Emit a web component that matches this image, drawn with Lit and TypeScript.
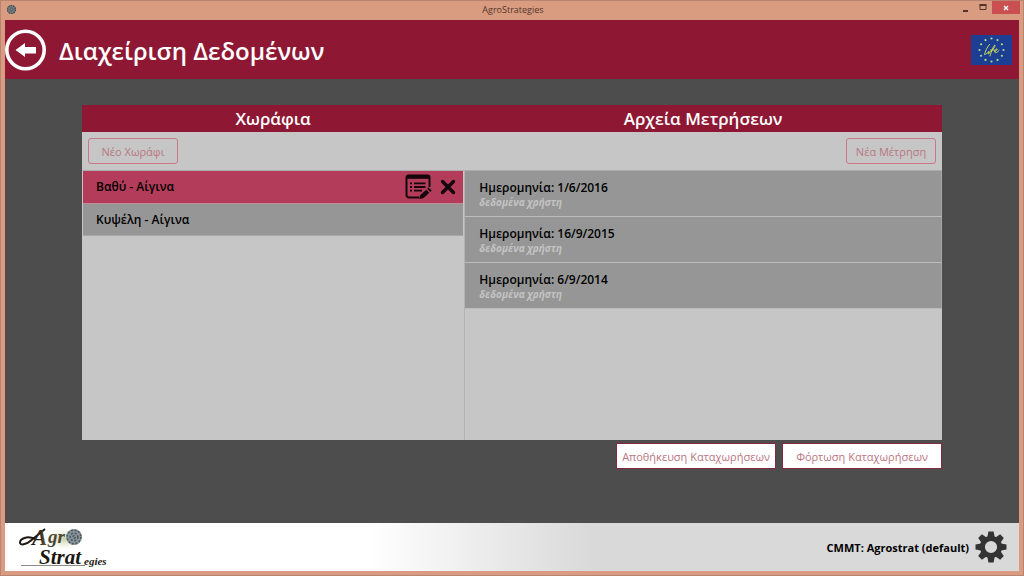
import { LitElement, html, css, svg } from "lit";
import { customElement, state } from "lit/decorators.js";
import { classMap } from "lit/directives/class-map.js";

const stars = Array.from({ length: 12 }, (_, i) => {
  const a = (i * Math.PI) / 6;
  return svg`<circle cx=${20.5 + 12 * Math.sin(a)} cy=${15 - 11.5 * Math.cos(a)} r="1.1" fill="#b9d98c"></circle>`;
});

const teeth = [0, 45, 90, 135, 180, 225, 270, 315].map(
  (a) => svg`<path d="M-3.6 -10L-2.6 -15.5H2.6L3.6 -10Z" transform="rotate(${a})"></path>`
);

@customElement("agro-logo")
export class AgroLogo extends LitElement {
  static styles = css`
    :host { display: block; }
    svg { display: block; }
    .word { font-family: "Liberation Serif", serif; font-style: italic; font-weight: 700; }
  `;
  render() {
    return html`<svg width="92" height="46" viewBox="0 0 92 46" role="img" aria-label="AgroStrategies">
      <defs>
        <radialGradient id="glow"><stop offset="0" stop-color="#cdd0a0"></stop><stop offset="1" stop-color="#fff" stop-opacity="0"></stop></radialGradient>
        <linearGradient id="ink" x2="1" y2="0"><stop offset="0" stop-color="#111"></stop><stop offset=".6" stop-color="#33291c"></stop><stop offset="1" stop-color="#6f6a4c"></stop></linearGradient>
      </defs>
      <ellipse cx="46" cy="15" rx="22" ry="13" fill="url(#glow)"></ellipse>
      <path d="M17 15C9 11 2 15 2 18.500c0 3 6 2.500 11-2L27 5" fill="none" stroke="#1c1812" stroke-width="2"></path>
      <text class="word" x="14" y="21" font-size="23" fill="url(#ink)">A</text>
      <text class="word" x="30" y="19" font-size="19" fill="#4c4732">gr</text>
      <circle cx="56" cy="13" r="8" fill="#8a949b"></circle>
      <g fill="none" stroke="#4b575f" stroke-width="1.5" stroke-dasharray="2 1.6">
        <circle cx="56" cy="13" r="6.8"></circle><circle cx="56" cy="13" r="3.800"></circle><circle cx="56" cy="13" r="1.2"></circle>
      </g>
      <path d="M3 41.500H67" stroke="#8a8a8a" stroke-width="1"></path>
      <text class="word" x="21" y="40" font-size="21" fill="#1b1712">Strat</text>
      <text class="word" x="66" y="41" font-size="11" fill="#1b1712">egies</text>
    </svg>`;
  }
}

@customElement("app-root")
export class AppRoot extends LitElement {
  @state() private selected = 0;

  private fields = ["Βαθύ - Αίγινα", "Κυψέλη - Αίγινα"];
  private dates = ["1/6/2016", "16/9/2015", "6/9/2014"];

  static styles = css`
    * { box-sizing: border-box; }
    :host {
      display: flex; flex-direction: column; height: 100vh; box-sizing: border-box;
      background: #d99c80; border: 1px solid #b98470;
      font-family: "Open Sans", "Noto Sans", sans-serif; font-size: 12px; color: #000;
    }
    h1, h2, ul { margin: 0; padding: 0; font-weight: 600; }
    ul { list-style: none; }
    button { font: inherit; color: inherit; background: none; border: 0; padding: 0; margin: 0; cursor: pointer; }
    svg { display: block; }

    .titlebar { display: grid; grid-template-columns: 1fr auto 1fr; align-items: center; height: 19px; padding: 0 3px 2px 5px; color: #54332a; font-size: 9px; flex: none; }
    .window-buttons { display: flex; justify-content: flex-end; align-self: start; }
    .window-buttons button { height: 13px; width: 18px; display: grid; place-items: center; }
    .window-buttons .close { background: #c94f50; width: 28px; }

    .window { flex: 1; display: flex; flex-direction: column; margin: 0 4px 4px; background: #4d4d4d; min-height: 0; }
    .header { display: flex; align-items: center; gap: 13px; height: 59px; padding-right: 7px; background: #8e1734; color: #fff; flex: none; }
    .header h1 { flex: 1; font-size: 24px; line-height: 32px; padding-top: 2px; }

    .main { flex: 1; display: flex; flex-direction: column; padding: 26px 77px 54px; min-height: 0; }
    .panel { flex: 1; display: grid; grid-template-columns: 4fr 5fr; background: #c6c6c6; min-height: 240px; }
    .column { display: flex; flex-direction: column; min-width: 0; }
    .column + .column .content { border-left: 1px solid #b4b4b4; }
    .column h2 { background: #8e1734; color: #fff; text-align: center; font-size: 17px; line-height: 26px; height: 27px; padding-top: 1px; }
    .tools { display: flex; align-items: center; height: 38px; padding: 0 6px; }
    .tools.end { justify-content: flex-end; }
    .outline { width: 90px; height: 26px; border: 1px solid #c9798a; border-radius: 3px; color: #b97683; font-size: 11px; }
    .content { flex: 1; border-top: 1px solid #acacac; }
    .content.fields { padding: 0 1px; }

    .field { display: flex; align-items: center; gap: 8px; height: 32px; padding-right: 7px; background: #969696; border-bottom: 1px solid #a8a8a8; font-weight: 600; }
    .field .name { flex: 1; text-align: left; padding-left: 13px; line-height: 32px; }
    .field.selected { height: 33px; background: #b23c59; border-bottom-color: #c08c98; }
    .record { height: 46px; padding: 8px 14px 0; background: #969696; border-bottom: 1px solid #bcbcbc; border-right: 1px solid #a8a8a8; }
    .date { font-weight: 600; line-height: 17px; }
    .note { font-size: 10px; line-height: 13px; font-style: italic; font-weight: 700; color: #c3c3c3; }

    .actions { display: flex; justify-content: flex-end; gap: 6px; padding-top: 3px; flex: none; }
    .action { width: 160px; height: 26px; background: #fff; border: 1px solid #84283f; color: #b97683; white-space: nowrap; font-size: 11px; }

    .footer { display: flex; align-items: center; justify-content: space-between; height: 48px; padding: 0 12px 0 13px; background: linear-gradient(90deg, #fff 0%, #fff 36%, #d9d9d9 58%, #d9d9d9 100%); flex: none; }
    .account { display: flex; align-items: center; gap: 6px; font-weight: 700; font-size: 11px; }
  `;

  render() {
    return html`
      <div class="titlebar">
        <svg width="11" height="11" viewBox="0 0 11 11"><circle cx="5.5" cy="5.5" r="4.5" fill="#77797a"></circle><circle cx="5.5" cy="5.5" r="4" fill="none" stroke="#414c52" stroke-width="1.2" stroke-dasharray="1.5 1"></circle><circle cx="5.5" cy="5.5" r="1.7" fill="none" stroke="#414c52" stroke-dasharray="1 1"></circle></svg>
        <span>AgroStrategies</span>
        <div class="window-buttons">
          <button aria-label="Minimize"><svg width="7" height="9"><path d="M1 8H6" stroke="#54332a" stroke-width="2"></path></svg></button>
          <button aria-label="Maximize"><svg width="8" height="7"><path d="M1 1V5.5H7V1" fill="none" stroke="#54332a"></path><path d="M.5 1H7.5" stroke="#54332a" stroke-width="2"></path></svg></button>
          <button class="close" aria-label="Close"><svg width="6" height="6"><path d="M1 1L5 5M5 1L1 5" stroke="#fff" stroke-width="1.4"></path></svg></button>
        </div>
      </div>
      <div class="window">
        <header class="header">
          <button aria-label="Πίσω">
            <svg width="41" height="42" viewBox="0 0 41 42"><circle cx="20.5" cy="21" r="18.7" fill="none" stroke="#fff" stroke-width="3.6"></circle><path d="M10.5 21L20 14V18H31V24.500H20V28Z" fill="#fff"></path></svg>
          </button>
          <h1>Διαχείριση Δεδομένων</h1>
          <svg width="41" height="30" viewBox="0 0 41 30" role="img" aria-label="Life">
            <rect width="41" height="30" fill="#1c3f94"></rect>
            ${stars}
            <g fill="none" stroke="#c5d958" stroke-linecap="round" stroke-linejoin="round">
              <path stroke-width="1" d="M18.500 9.500C15.500 13 14.500 16 13.500 19.500C15 19.500 16.500 18 17.500 16.500M18 16.500L17 19C18.500 18.500 19.500 17 20.500 15.500"></path>
              <path stroke-width="1" d="M20 16C22.500 14 24.500 11.500 24 10C22.500 10.500 20.500 16 19 21M19.500 15H24M23.500 16.500C25.500 16 27 14.500 26 13.800C24.500 13.800 23 17.500 24.500 17.700C25.800 17.700 27 16.500 28 15.500"></path>
            </g>
          </svg>
        </header>
        <main class="main">
          <div class="panel">
            <section class="column">
              <h2>Χωράφια</h2>
              <div class="tools"><button class="outline">Νέο Χωράφι</button></div>
              <div class="content fields"><ul>
                ${this.fields.map((name, i) => html`
                  <li class=${classMap({ field: true, selected: i === this.selected })}>
                    <button class="name" @click=${() => (this.selected = i)}>${name}</button>
                    ${i === this.selected ? html`
                      <button aria-label="Επεξεργασία">
                        <svg width="27" height="26" viewBox="0 0 27 26">
                          <path d="M14.500 23.500H4A2.500 2.500 0 0 1 1.500 21V3.500A2 2 0 0 1 3.500 1.500H22.500A2 2 0 0 1 24.500 3.500V13" fill="none" stroke="#14060a" stroke-width="2"></path>
                          <path d="M1.500 3H24.500" stroke="#14060a" stroke-width="3.600"></path>
                          <path d="M5 9.300H7M5 13H7M5 16.700H7M9 9.300H20.500M9 13H20.500M9 16.700H17" stroke="#14060a" stroke-width="1.800"></path>
                          <path d="M14.500 25L15.300 21L21.300 15.700L24.300 18.800L18.300 24.200ZM22.200 14.800L23.600 13.600L26.700 16.500L25.200 18Z" fill="#14060a"></path>
                        </svg>
                      </button>
                      <button aria-label="Διαγραφή">
                        <svg width="16" height="16" viewBox="0 0 16 16"><path d="M2.500 2.500L13.500 13.500M13.500 2.500L2.500 13.500" stroke="#14060a" stroke-width="3.400" stroke-linecap="round"></path></svg>
                      </button>` : ""}
                  </li>`)}
              </ul></div>
            </section>
            <section class="column">
              <h2>Αρχεία Μετρήσεων</h2>
              <div class="tools end"><button class="outline">Νέα Μέτρηση</button></div>
              <div class="content"><ul>
                ${this.dates.map((d) => html`<li class="record"><div class="date">Ημερομηνία: ${d}</div><div class="note">δεδομένα χρήστη</div></li>`)}
              </ul></div>
            </section>
          </div>
          <div class="actions">
            <button class="action">Αποθήκευση Καταχωρήσεων</button>
            <button class="action">Φόρτωση Καταχωρήσεων</button>
          </div>
        </main>
        <footer class="footer">
          <agro-logo></agro-logo>
          <div class="account">
            <span>CMMT: Agrostrat (default)</span>
            <button aria-label="Ρυθμίσεις">
              <svg width="32" height="32" viewBox="-16 -16 32 32" fill="#333">${teeth}<circle r="8.600" fill="none" stroke="#333" stroke-width="5"></circle></svg>
            </button>
          </div>
        </footer>
      </div>`;
  }
}
